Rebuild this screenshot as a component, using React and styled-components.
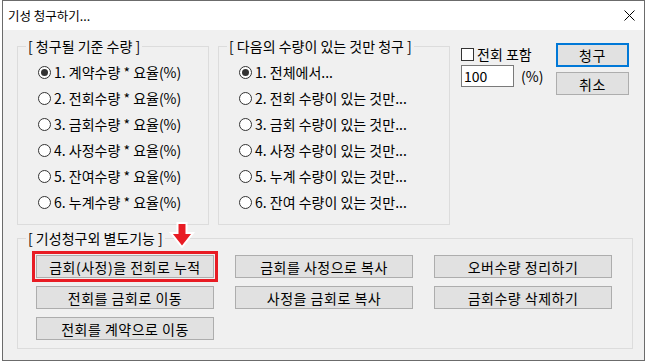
import React from "react";
import styled, { createGlobalStyle } from "styled-components";

const GlobalStyle = createGlobalStyle`
  body {
    margin: 0;
    background: #fff;
    font-family: "Noto Sans CJK KR", "Noto Sans", sans-serif;
    color: #000;
  }
`;

const Window = styled.div`
  margin-left: 2px;
  width: 643px;
  height: 361px;
  box-sizing: border-box;
  border: 1px solid #6b6b6b;
  background: #f0f0f0;
  display: flex;
  flex-direction: column;
`;

const TitleBar = styled.div`
  height: 29px;
  background: #fff;
  display: flex;
  align-items: center;
  justify-content: space-between;
  padding: 0 9px 0 5px;
  font-size: 12.5px;
`;

const Body = styled.div`
  padding: 16px 0 0 14px;
  display: flex;
  flex-direction: column;
`;

const TopRow = styled.div`
  display: flex;
  align-items: flex-start;
`;

const Group = styled.div`
  position: relative;
  box-sizing: border-box;
  width: ${(p) => p.$w}px;
  height: ${(p) => p.$h}px;
  margin-left: ${(p) => p.$ml || 0}px;
  margin-top: ${(p) => p.$mt || 0}px;
  border: 1px solid #dcdcdc;
`;

const Legend = styled.div`
  width: fit-content;
  margin: -9px 0 0 8px;
  padding: 0 2px;
  background: #f0f0f0;
  font-size: 14px;
  line-height: 16px;
  white-space: nowrap;
`;

const RadioList = styled.div`
  margin-top: 5px;
  display: flex;
  flex-direction: column;
`;

const RadioRow = styled.div`
  height: 26px;
  display: flex;
  align-items: center;
  gap: 3px;
  padding-left: 20px;
  font-size: 14px;
  white-space: nowrap;
`;

const RadioDot = styled.span`
  width: 13px;
  height: 13px;
  flex: none;
  box-sizing: border-box;
  border-radius: 50%;
  border: 1px solid #333;
  background: #fff;
  display: flex;
  align-items: center;
  justify-content: center;
  &::after {
    content: "";
    width: 7px;
    height: 7px;
    border-radius: 50%;
    background: ${(p) => (p.$on ? "#333" : "transparent")};
  }
`;

const Side = styled.div`
  margin-left: 11px;
  display: flex;
`;

const OptionCol = styled.div`
  width: 95px;
  padding-top: 1px;
  display: flex;
  flex-direction: column;
  gap: 4px;
  font-size: 14px;
`;

const CheckRow = styled.div`
  display: flex;
  align-items: center;
  gap: 3px;
  height: 14px;
`;

const CheckBox = styled.span`
  width: 13px;
  height: 13px;
  box-sizing: border-box;
  border: 1px solid #333;
  background: #fff;
`;

const RateRow = styled.div`
  display: flex;
  align-items: center;
  gap: 7px;
`;

const RateInput = styled.div`
  width: 53px;
  height: 22px;
  box-sizing: border-box;
  border: 1px solid #7a7a7a;
  background: #fff;
  padding-left: 2px;
  line-height: 20px;
`;

const ButtonCol = styled.div`
  margin-top: -3px;
  display: flex;
  flex-direction: column;
  gap: 5px;
`;

const Button = styled.div`
  box-sizing: border-box;
  width: ${(p) => p.$w || 178}px;
  height: ${(p) => p.$h || 23}px;
  background: #e1e1e1;
  border: ${(p) => (p.$default ? "2px solid #0078d7" : "1px solid #adadad")};
  outline: ${(p) => (p.$mark ? "3px solid #e81c24" : "none")};
  outline-offset: 1px;
  display: flex;
  align-items: center;
  justify-content: center;
  font-size: 14px;
  letter-spacing: 0.5px;
  white-space: nowrap;
`;

const ButtonGrid = styled.div`
  margin: 9px 0 0 18px;
  display: grid;
  grid-template-columns: repeat(3, 178px);
  column-gap: 21px;
  row-gap: 8px;
`;

const Arrow = styled.svg`
  position: absolute;
  left: 150px;
  top: -17px;
`;

const basis = [
  "1. 계약수량 * 요율(%)",
  "2. 전회수량 * 요율(%)",
  "3. 금회수량 * 요율(%)",
  "4. 사정수량 * 요율(%)",
  "5. 잔여수량 * 요율(%)",
  "6. 누계수량 * 요율(%)",
];

const filters = [
  "1. 전체에서...",
  "2. 전회 수량이 있는 것만...",
  "3. 금회 수량이 있는 것만...",
  "4. 사정 수량이 있는 것만...",
  "5. 누계 수량이 있는 것만...",
  "6. 잔여 수량이 있는 것만...",
];

const extras = [
  { label: "금회(사정)을 전회로 누적", mark: true },
  { label: "금회를 사정으로 복사" },
  { label: "오버수량 정리하기" },
  { label: "전회를 금회로 이동" },
  { label: "사정을 금회로 복사" },
  { label: "금회수량 삭제하기" },
  { label: "전회를 계약으로 이동" },
];

const RadioGroup = ({ items }) => (
  <RadioList>
    {items.map((t, i) => (
      <RadioRow key={t}>
        <RadioDot $on={i === 0} />
        {t}
      </RadioRow>
    ))}
  </RadioList>
);

export default function App() {
  return (
    <>
      <GlobalStyle />
      <Window>
        <TitleBar>
          <span>기성 청구하기...</span>
          <svg width="11" height="11" viewBox="0 0 11 11">
            <path d="M0.5 0.5 L10.5 10.5 M10.5 0.5 L0.5 10.5" stroke="#000" strokeWidth="1" />
          </svg>
        </TitleBar>
        <Body>
          <TopRow>
            <Group $w={192} $h={179}>
              <Legend>[ 청구될 기준 수량 ]</Legend>
              <RadioGroup items={basis} />
            </Group>
            <Group $w={232} $h={179} $ml={9}>
              <Legend>[ 다음의 수량이 있는 것만 청구 ]</Legend>
              <RadioGroup items={filters} />
            </Group>
            <Side>
              <OptionCol>
                <CheckRow>
                  <CheckBox />
                  전회 포함
                </CheckRow>
                <RateRow>
                  <RateInput>100</RateInput>
                  (%)
                </RateRow>
              </OptionCol>
              <ButtonCol>
                <Button $w={73} $h={24} $default>청구</Button>
                <Button $w={73} $h={23}>취소</Button>
              </ButtonCol>
            </Side>
          </TopRow>
          <Group $w={616} $h={111} $mt={13}>
            <Legend>[ 기성청구외 별도기능 ]</Legend>
            <Arrow width="28" height="27" viewBox="0 0 28 27">
              <path
                d="M9.5 1 H18.5 V11 H25 L14 25 L3 11 H9.5 Z"
                fill="#e81c24"
                stroke="#fff"
                strokeWidth="2"
              />
            </Arrow>
            <ButtonGrid>
              {extras.map((b) => (
                <Button key={b.label} $mark={b.mark}>
                  {b.label}
                </Button>
              ))}
            </ButtonGrid>
          </Group>
        </Body>
      </Window>
    </>
  );
}
